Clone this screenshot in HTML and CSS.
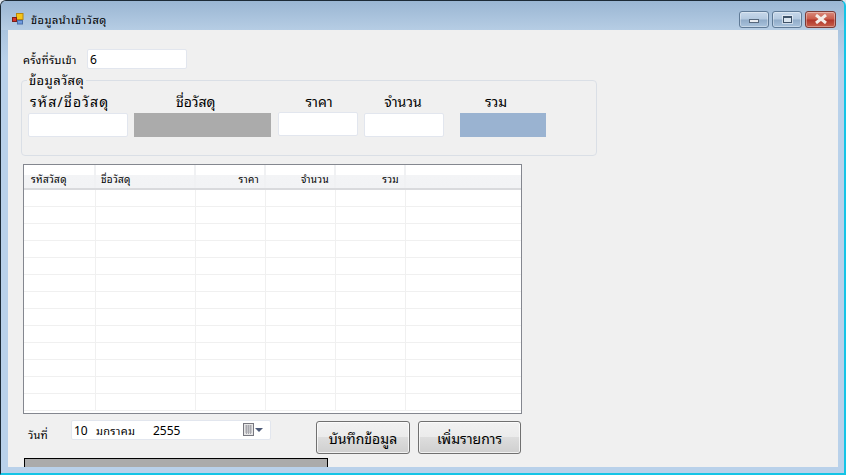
FILE: index.html
```html
<!DOCTYPE html>
<html lang="th">
<head>
<meta charset="utf-8">
<title>ข้อมูลนำเข้าวัสดุ</title>
<link rel="stylesheet" href="styles.css">
</head>
<body>
<div class="window">
  <header class="titlebar">
    <svg class="app-icon" width="12" height="12" viewBox="0 0 12 12">
      <rect x="4.500" y="0.500" width="6.500" height="6" fill="#f5c518" stroke="#b8860b"/>
      <rect x="0.500" y="4.500" width="4" height="4" fill="#d8322a" stroke="#7a2018"/>
      <rect x="5.500" y="7.500" width="5" height="3.500" fill="#6f9be0" stroke="#4a6fa8"/>
    </svg>
    <span class="title">ข้อมูลนำเข้าวัสดุ</span>
    <div class="win-buttons">
      <div class="win-btn"><span class="glyph-min"></span></div>
      <div class="win-btn"><span class="glyph-max"></span></div>
      <div class="win-btn win-close">
        <svg width="14" height="10" viewBox="0 0 14 10"><path d="M2 1 L12 9 M12 1 L2 9" stroke="#f4ece8" stroke-width="3"/></svg>
      </div>
    </div>
  </header>
  <main class="client">
    <div class="receive-row">
      <span class="small-label">ครั้งที่รับเข้า</span>
      <div class="textbox receive-box">6</div>
    </div>
    <section class="group">
      <div class="legend">ข้อมูลวัสดุ</div>
      <div class="fields">
        <div class="field f-code"><span class="field-label">รหัส/ชื่อวัสดุ</span><div class="textbox"></div></div>
        <div class="field f-name"><span class="field-label">ชื่อวัสดุ</span><div class="readout gray"></div></div>
        <div class="field f-price"><span class="field-label">ราคา</span><div class="textbox"></div></div>
        <div class="field f-qty"><span class="field-label">จำนวน</span><div class="textbox"></div></div>
        <div class="field f-total"><span class="field-label">รวม</span><div class="readout blue"></div></div>
      </div>
    </section>
    <div class="grid-wrap">
      <table class="grid">
        <colgroup><col class="c1"><col class="c2"><col class="c3"><col class="c3"><col class="c3"><col></colgroup>
        <thead>
          <tr><th>รหัสวัสดุ</th><th>ชื่อวัสดุ</th><th class="num">ราคา</th><th class="num">จำนวน</th><th class="num">รวม</th><th></th></tr>
        </thead>
        <tbody>
          <tr><td></td><td></td><td></td><td></td><td></td><td></td></tr>
          <tr><td></td><td></td><td></td><td></td><td></td><td></td></tr>
          <tr><td></td><td></td><td></td><td></td><td></td><td></td></tr>
          <tr><td></td><td></td><td></td><td></td><td></td><td></td></tr>
          <tr><td></td><td></td><td></td><td></td><td></td><td></td></tr>
          <tr><td></td><td></td><td></td><td></td><td></td><td></td></tr>
          <tr><td></td><td></td><td></td><td></td><td></td><td></td></tr>
          <tr><td></td><td></td><td></td><td></td><td></td><td></td></tr>
          <tr><td></td><td></td><td></td><td></td><td></td><td></td></tr>
          <tr><td></td><td></td><td></td><td></td><td></td><td></td></tr>
          <tr><td></td><td></td><td></td><td></td><td></td><td></td></tr>
          <tr><td></td><td></td><td></td><td></td><td></td><td></td></tr>
          <tr><td></td><td></td><td></td><td></td><td></td><td></td></tr>
        </tbody>
      </table>
    </div>
    <div class="bottom-row">
      <span class="small-label date-label">วันที่</span>
      <div class="datepicker">
        <span class="d-day">10</span><span class="d-month">มกราคม</span><span class="d-year">2555</span>
        <svg class="cal" width="22" height="14" viewBox="0 0 22 14">
          <rect x="0.500" y="0.500" width="10" height="12" fill="#e6e6e6" stroke="#77777f"/>
          <path d="M2 3h7M2 5h7M2 7h7M2 9h7M3.500 2v9M5.500 2v9M7.500 2v9" stroke="#a8a8ae" stroke-width="1"/>
          <path d="M12 5h8l-4 4z" fill="#4d5a78"/>
        </svg>
      </div>
      <button class="btn btn-save">บันทึกข้อมูล</button>
      <button class="btn btn-add">เพิ่มรายการ</button>
    </div>
    <div class="progress"></div>
  </main>
</div>
</body>
</html>
```
FILE: styles.css
```css
* { box-sizing: border-box; }
html, body { margin: 0; padding: 0; background: #dfe6ee; }
body {
  width: 846px; height: 475px; overflow: hidden;
  font-family: "Noto Sans Thai Looped", "Noto Serif Thai", "Loma", "Garuda", "Norasi", "Waree", "Noto Sans Thai", "Noto Sans", "DejaVu Sans", sans-serif;
  color: #000;
}
.window {
  width: 846px; height: 475px;
  display: flex; flex-direction: column;
  background: linear-gradient(#9db9d5 0, #b9d1ea 60px, #b9d1ea 100%);
  border: 1px solid #1c2a36;
  border-bottom: 2px solid #14c4e6;
  border-right: 2px solid #14c4e6;
  border-radius: 6px 6px 0 0;
  overflow: hidden;
}
.titlebar {
  height: 29px; flex: none;
  display: flex; align-items: center;
  padding: 0 8px 0 11px;
  background: linear-gradient(#9ab6d3, #b6cde4);
}
.app-icon { flex: none; margin-top: 6px; }
.title { font-size: 11px; letter-spacing: 0.5px; margin-left: 7px; margin-top: 7px; white-space: nowrap; }
.win-buttons { margin-left: auto; display: flex; gap: 3px; margin-top: 7px; }
.win-btn {
  width: 30px; height: 17px;
  border: 1px solid #5f7a96; border-radius: 3px;
  display: flex; align-items: center; justify-content: center;
  background: linear-gradient(#c7d8ea 0, #b4c9df 48%, #90abc8 52%, #a9c3dc 100%);
  box-shadow: inset 0 0 0 1px rgba(255,255,255,.35);
}
.win-close {
  width: 31px; border-color: #7a3a36;
  background: linear-gradient(#d98a7c 0, #c95a48 48%, #b0352a 52%, #c8604c 100%);
}
.glyph-min { width: 10px; height: 4px; margin-top: 4px; background: #e8ecf1; border: 1px solid #55677c; }
.glyph-max { width: 9px; height: 7px; border: 1px solid #3e5268; border-top-width: 2px; background: #dbe6f0; outline: 1px solid rgba(255,255,255,.5); }
.client {
  flex: 1; min-height: 0;
  margin: 0 6px 6px 7px;
  background: #f0f0f0;
  padding: 19px 0 0 13px;
  overflow: hidden;
  display: flex; flex-direction: column;
}
.receive-row { display: flex; align-items: center; height: 20px; padding-left: 2px; }
.small-label { font-size: 11px; letter-spacing: 0.2px; white-space: nowrap; }
.receive-row .small-label { width: 64px; }
.textbox {
  height: 24px; background: #fff;
  border: 1px solid #e2e6ee; border-radius: 2px;
  font-size: 12px; padding-left: 2px; line-height: 18px;
}
.receive-box { width: 100px; height: 20px; }
.group {
  width: 576px; height: 76px; margin-top: 11px;
  border: 1px solid #dadfe6; border-radius: 4px;
  position: relative;
  flex: none;
  padding: 14px 0 0 6px;
}
.legend {
  position: absolute; left: 5px; top: -9px;
  padding: 0 2px; background: #f0f0f0;
  font-size: 13px; letter-spacing: 0.4px; line-height: 15px; white-space: nowrap;
}
.fields { display: flex; }
.field { display: flex; flex-direction: column; }
.field-label { font-size: 14px; line-height: 18px; height: 18px; margin-top: -3px; margin-bottom: 3px; white-space: nowrap; }
.f-code { width: 100px; margin-right: 6px; }
.f-code .field-label { padding-left: 2px; letter-spacing: 1.2px; }
.f-name { width: 137px; margin-right: 7px; }
.f-name .field-label { padding-left: 42px; }
.f-price { width: 80px; margin-right: 6px; text-align: center; }
.f-price .field-label { padding-left: 2px; }
.f-price .textbox { margin-top: -1px; }
.f-qty { width: 80px; margin-right: 16px; text-align: center; }
.f-qty .field-label { padding-right: 2px; }
.f-total { width: 86px; text-align: center; }
.f-total .field-label { padding-right: 14px; }
.readout { height: 24px; }
.gray { background: #ababab; }
.blue { background: #9ab3d1; }
.grid-wrap {
  width: 499px; height: 250px; margin: 8px 0 0 2px; flex: none;
  border: 1px solid #84878f; background: #fff; overflow: hidden;
}
.grid { border-collapse: collapse; table-layout: fixed; width: 497px; }
.c1 { width: 71px; }
.c2 { width: 100px; }
.c3 { width: 70px; }
.grid th {
  height: 24px; padding: 4px 5px 0 7px;
  font-size: 10px; font-weight: 400; letter-spacing: 0.3px; text-align: left; white-space: nowrap;
  background: linear-gradient(#fff 0, #fff 42%, #f3f4f6 44%, #f2f3f5 100%);
  border-right: 2px solid #f0f1f3;
  border-bottom: 2px solid #d9dadd;
}
.grid th:nth-child(2) { padding-left: 5px; }
.grid th:last-child { border-right: 0; }
.grid th.num { text-align: right; }
.grid td {
  height: 17px; padding: 0;
  border-right: 1px solid #f0f0f0; border-bottom: 1px solid #f0f0f0;
}
.grid td:last-child { border-right: 0; }
.bottom-row { display: flex; align-items: flex-start; height: 38px; margin-top: 6px; flex: none; padding-left: 7px; }
.date-label { width: 43px; margin-top: 5px; }
.datepicker {
  width: 200px; height: 20px; flex: none;
  background: #fff; border: 1px solid #e2e6ee; border-radius: 2px;
  display: flex; align-items: center;
  font-size: 12px; padding-left: 2px; padding-bottom: 1px; position: relative;
}
.d-day { width: 22px; }
.d-month { width: 57px; font-size: 11px; letter-spacing: 0.3px; }
.cal { margin-left: auto; margin-right: 5px; }
.btn {
  height: 33px; flex: none; margin-top: 1px;
  font: inherit; font-size: 14px; color: #000;
  border: 1px solid #707070; border-radius: 3px;
  background: linear-gradient(#f2f2f2 0, #ebebeb 48%, #dddddd 50%, #cfcfcf 100%);
  box-shadow: inset 0 0 0 1px rgba(255,255,255,.7);
  padding: 0;
}
.btn-save { width: 94px; margin-left: 45px; }
.btn-add { width: 103px; margin-left: 8px; }
.progress {
  width: 304px; height: 12px; flex: none; margin: 0 0 0 3px;
  background: #ababab; border: 1px solid #000;
}
```
